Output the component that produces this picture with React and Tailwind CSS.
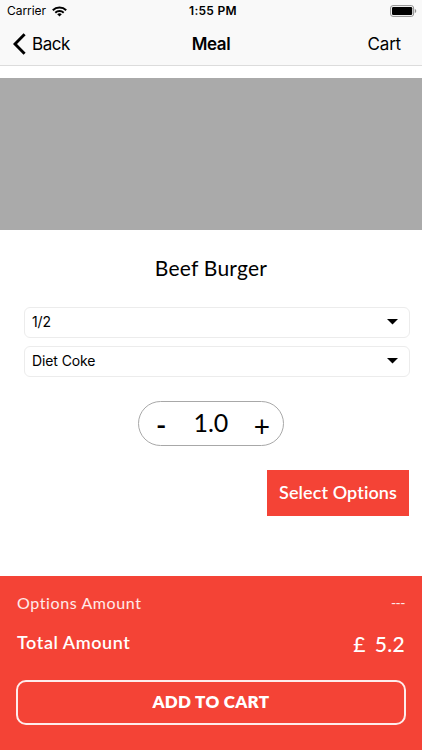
import { useState } from 'react'

const StatusBar = () => (
  <div className="grid h-[22px] grid-cols-3 items-center pl-[7px] pr-[5px]">
    <div className="flex items-center gap-[6px]">
      <span className="text-[12px] leading-[22px] tracking-[-0.05px]">
        Carrier
      </span>
      <svg width="15" height="11" viewBox="0 0 15 11" fill="none">
        <path d="M.8 4.200a9.500 9.500 0 0 1 13.400 0" stroke="#000" strokeWidth="2" />
        <path d="M3.300 6.700a6 6 0 0 1 8.400 0" stroke="#000" strokeWidth="1.900" />
        <path d="M7.500 10.600 5.200 8.300a3.300 3.300 0 0 1 4.600 0z" fill="#000" />
      </svg>
    </div>
    <span className="pl-[2px] text-center text-[12px] font-semibold leading-[22px] tracking-[0.3px]">
      1:55 PM
    </span>
    <svg
      className="justify-self-end"
      width="27"
      height="12"
      viewBox="0 0 27 12"
    >
      <rect
        x="0.6"
        y="0.6"
        width="23"
        height="10.8"
        rx="2.4"
        fill="none"
        stroke="#8f8f8f"
      />
      <rect x="2" y="2" width="20.2" height="8" rx="1.2" fill="#000" />
      <path d="M24.8 4v4c1-.4 1.4-1.100 1.400-2s-.4-1.600-1.400-2z" fill="#8f8f8f" />
    </svg>
  </div>
)

const NavBar = () => (
  <nav className="grid h-[43px] grid-cols-3 items-center pl-[13px] pr-[21px] text-[17px] leading-[44px]">
    <button className="flex items-center gap-[6px]">
      <svg width="13" height="22" viewBox="0 0 13 22" fill="none">
        <path d="M11.600 1.300 2 11l9.600 9.700" stroke="#000" strokeWidth="2.900" />
      </svg>
      <span className="tracking-[-0.45px]">Back</span>
    </button>
    <h1 className="pl-[8px] text-center font-semibold tracking-[-0.45px]">
      Meal
    </h1>
    <button className="text-right tracking-[-0.2px]">Cart</button>
  </nav>
)

const Picker = ({ value }) => (
  <button className="flex h-[31px] w-full items-center justify-between rounded-[6px] border border-[#ececec] pb-[1px] pl-[7px] pr-[11px] text-[14px] tracking-[-0.1px]">
    <span className="pb-[1px]">{value}</span>
    <svg width="11" height="6" viewBox="0 0 11 6">
      <path d="M0 0h11L5.500 5.500z" fill="#000" />
    </svg>
  </button>
)

const App = () => {
  const [quantity, setQuantity] = useState(1)

  return (
    <div className="flex h-[750px] w-[422px] flex-col bg-white font-['Inter',sans-serif] text-black">
      <header className="h-[66px] border-b border-[#dcdcdc] bg-[#f9f9f9]">
        <StatusBar />
        <NavBar />
      </header>

      <div className="mt-3 h-[152px] shrink-0 bg-[#aaaaaa]" />

      <main className="flex grow flex-col pl-[24px] pr-[12px]">
        <h2 className="mr-[12px] mt-[24px] text-center font-['Lato',sans-serif] text-[21px] leading-[28px] tracking-[0.25px]">
          Beef Burger
        </h2>

        <div className="mt-[25px] flex flex-col gap-2">
          <Picker value="1/2" />
          <Picker value="Diet Coke" />
        </div>

        <div className="mr-[12px] mt-[24px] flex h-[45px] w-[146px] items-center justify-between self-center rounded-full border border-[#a8a8a8] pl-[17px] pr-[13px] font-['Lato',sans-serif]">
          <button
            className="flex h-full w-[10px] items-center"
            onClick={() => setQuantity(Math.max(1, quantity - 1))}
          >
            <span className="text-[28px] font-semibold leading-none">-</span>
          </button>
          <span className="pb-[2px] pl-[2px] text-[25px] leading-none">
            {quantity.toFixed(1)}
          </span>
          <button
            className="flex h-full items-center pt-[4px]"
            onClick={() => setQuantity(quantity + 1)}
          >
            <span className="text-[28px] leading-none">+</span>
          </button>
        </div>

        <button className="mr-[1px] mt-[24px] h-[46px] w-[142px] self-end bg-[#f44336] pb-[1px] font-['Lato',sans-serif] text-[18px] font-semibold tracking-[0.1px] text-white [font-variant-ligatures:none]">
          Select Options
        </button>
      </main>

      <footer className="h-[174px] shrink-0 bg-[#f44336] px-[16px] font-['Lato',sans-serif] text-white [font-variant-ligatures:none]">
        <div className="mt-[16px] flex h-[22px] items-center justify-between px-[1px] text-[16px] text-white/90">
          <span className="tracking-[0.6px]">Options Amount</span>
          <span className="pb-[2px] text-[14px] tracking-[-0.5px]">---</span>
        </div>
        <div className="mt-[15px] flex h-[28px] items-center justify-between px-[1px]">
          <span className="pb-[1px] text-[18px] font-semibold tracking-[0.55px]">
            Total Amount
          </span>
          <span className="flex gap-[9px] pt-[2px] text-[21px] font-medium tracking-[0.3px]">
            <span>£</span>
            <span>5.2</span>
          </span>
        </div>
        <button className="mt-[23px] h-[45px] w-full rounded-[10px] border-2 border-white/90 pb-[1px] text-[17px] font-extrabold tracking-[0.3px]">
          ADD TO CART
        </button>
      </footer>
    </div>
  )
}

export default App
